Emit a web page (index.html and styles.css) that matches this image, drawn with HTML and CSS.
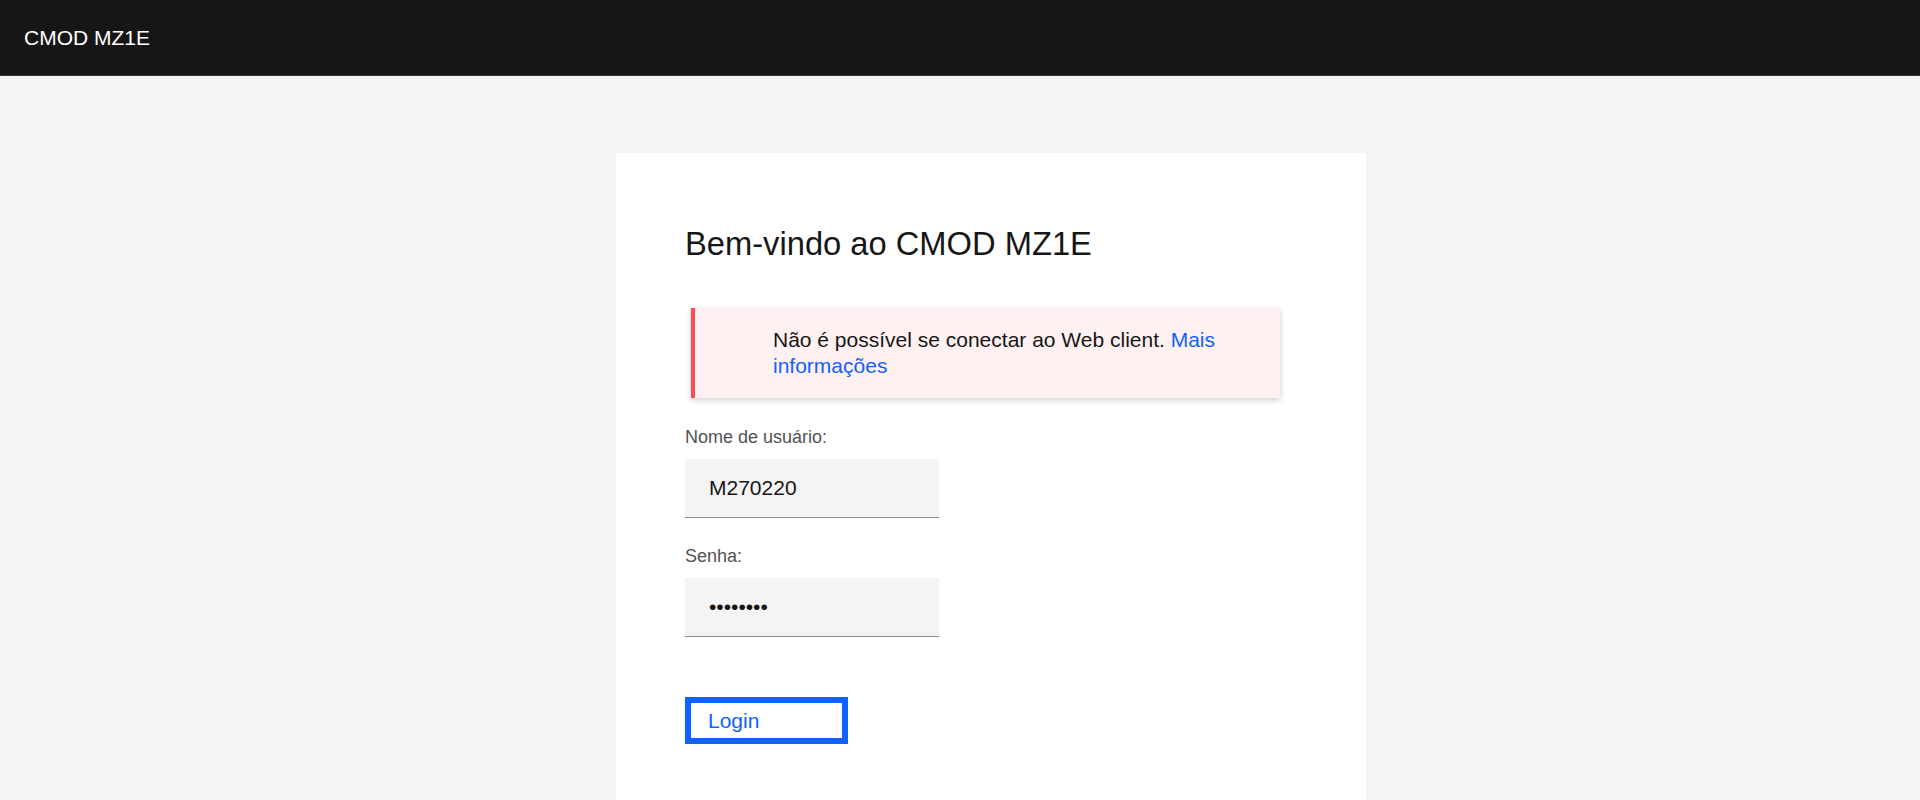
FILE: index.html
```html
<!DOCTYPE html>
<html lang="pt-BR">
<head>
<meta charset="utf-8">
<title>CMOD MZ1E</title>
<link rel="stylesheet" href="styles.css">
</head>
<body>
<header class="topbar">
  <span class="brand">CMOD MZ1E</span>
</header>
<main class="main">
  <section class="card">
    <h1 class="title">Bem-vindo ao CMOD MZ1E</h1>
    <div class="notice">
      <p class="notice-text">Não é possível se conectar ao Web client. <a class="notice-link" href="#">Mais informações</a></p>
    </div>
    <form class="form">
      <label class="label" for="user">Nome de usuário:</label>
      <input class="field" id="user" type="text" value="M270220">
      <label class="label label-gap" for="pass">Senha:</label>
      <input class="field" id="pass" type="password" value="abcdefgh">
      <button class="login" type="button">Login</button>
    </form>
  </section>
</main>
</body>
</html>
```

FILE: styles.css
```css
* { box-sizing: border-box; }

html, body {
  margin: 0;
  padding: 0;
  height: 100%;
}

body {
  background: #f4f4f4;
  font-family: "Liberation Sans", Arial, sans-serif;
  color: #161616;
  overflow: hidden;
}

.topbar {
  height: 76px;
  background: #161616;
  border-bottom: 1px solid #393939;
  display: flex;
  align-items: center;
  padding-left: 24px;
}

.brand {
  color: #ffffff;
  font-size: 21px;
  line-height: 24px;
}

.main {
  padding-top: 77px;
}

.card {
  margin-left: 616px;
  width: 750px;
  height: 647px;
  background: #ffffff;
  padding: 71px 70px 0 69px;
}

.title {
  margin: 0;
  font-size: 32.7px;
  line-height: 40px;
  font-weight: 400;
  color: #161616;
}

.notice {
  margin-top: 44px;
  width: 589px;
  background: #fff1f1;
  border-left: 4px solid #fa4d56;
  box-shadow: 0 2px 6px rgba(0, 0, 0, 0.2);
  padding: 19px 48px 19px 78px;
  margin-left: 6px;
}

.notice-text {
  margin: 0;
  font-size: 21px;
  line-height: 26px;
  color: #161616;
}

.notice-link {
  color: #0f62fe;
  text-decoration: none;
}

.form {
  display: flex;
  flex-direction: column;
  align-items: flex-start;
  margin-top: 27px;
}

.label {
  font-size: 18px;
  line-height: 24px;
  color: #525252;
  margin-bottom: 10px;
}

.label-gap {
  margin-top: 26px;
}

.field {
  width: 254px;
  height: 59px;
  background: #f4f4f4;
  border: none;
  border-bottom: 1px solid #8d8d8d;
  padding: 0 24px;
  font-family: "Liberation Sans", Arial, sans-serif;
  font-size: 21px;
  color: #161616;
  outline: none;
}

.login {
  margin-top: 60px;
  width: 163px;
  height: 47px;
  background: #ffffff;
  border: 6px solid #0f62fe;
  padding: 0 0 0 17px;
  text-align: left;
  font-family: "Liberation Sans", Arial, sans-serif;
  font-size: 21px;
  color: #0f62fe;
  cursor: pointer;
}
```
